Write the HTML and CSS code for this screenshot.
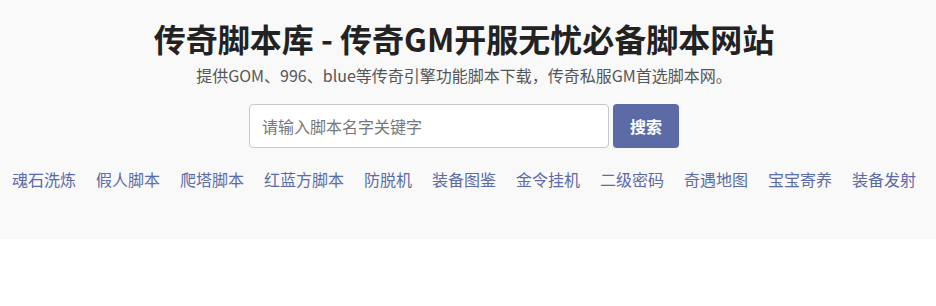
FILE: index.html
```html
<!DOCTYPE html>
<html lang="zh-CN">
<head>
    <meta charset="UTF-8">
    <meta name="viewport" content="width=device-width, initial-scale=1.0">
    <title>传奇脚本库 - 传奇GM开服无忧必备脚本网站</title>
    <link rel="stylesheet" href="styles.css">
</head>
<body>
    <div id="header">
        <h1>传奇脚本库 - 传奇GM开服无忧必备脚本网站</h1>
        <p class="subtitle">提供GOM、996、blue等传奇引擎功能脚本下载，传奇私服GM首选脚本网。</p>
        <form id="search-form">
            <input type="text" class="search-input" placeholder="请输入脚本名字关键字">
            <button type="submit" class="search-btn">搜索</button>
        </form>
        <div id="tag-list">
            <a href="#" class="tag">魂石洗炼</a>
            <a href="#" class="tag">假人脚本</a>
            <a href="#" class="tag">爬塔脚本</a>
            <a href="#" class="tag">红蓝方脚本</a>
            <a href="#" class="tag">防脱机</a>
            <a href="#" class="tag">装备图鉴</a>
            <a href="#" class="tag">金令挂机</a>
            <a href="#" class="tag">二级密码</a>
            <a href="#" class="tag">奇遇地图</a>
            <a href="#" class="tag">宝宝寄养</a>
            <a href="#" class="tag">装备发射</a>
        </div>
    </div>
</body>
</html>
```

FILE: styles.css
```css
body {
    margin: 0;
    font-family: "Noto Sans CJK SC", "Noto Sans", sans-serif;
    background-color: #fff;
}
#header {
    background-color: #f9f9f9;
    height: 239px;
    padding: 16px 8px 0 0;
    box-sizing: border-box;
    text-align: center;
}
#header h1 {
    margin: 0;
    font-size: 32px;
    line-height: 44px;
    color: #222;
    font-weight: bold;
}
.subtitle {
    margin: 3px 0 0;
    font-size: 16px;
    line-height: 24px;
    color: #555;
}
#search-form {
    display: flex;
    justify-content: center;
    gap: 4px;
    margin-top: 17px;
}
.search-input {
    width: 360px;
    height: 44px;
    box-sizing: border-box;
    padding: 0 12px;
    font-size: 16px;
    font-family: inherit;
    border: 1px solid #c8c8c8;
    border-radius: 4px;
    background-color: #fff;
    outline: none;
}
.search-input::placeholder {
    color: #777;
}
.search-btn {
    width: 66px;
    height: 44px;
    font-size: 16px;
    font-family: inherit;
    font-weight: bold;
    color: #fff;
    background-color: #5c6ba6;
    border: none;
    border-radius: 4px;
    cursor: pointer;
}
#tag-list {
    display: flex;
    justify-content: center;
    gap: 20px;
    margin-top: 19px;
}
.tag {
    font-size: 16px;
    line-height: 24px;
    color: #5b6aa8;
    text-decoration: none;
}
```
